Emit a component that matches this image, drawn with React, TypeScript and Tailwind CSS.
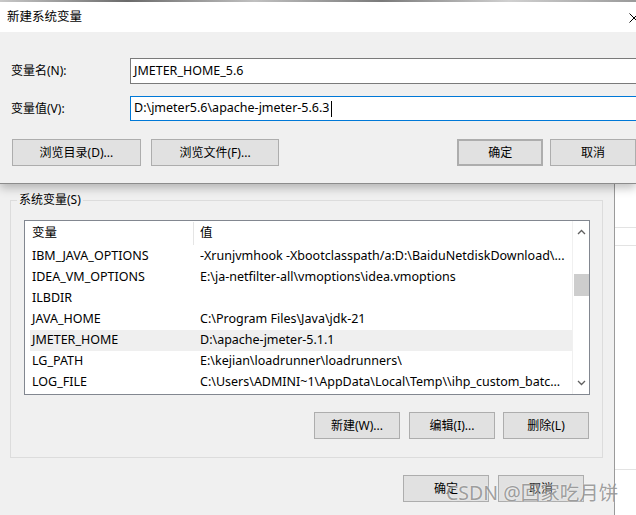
import React from "react";

const font = { fontFamily: '"Noto Sans", "Noto Sans CJK SC", sans-serif' };

const btnClass =
  "flex h-[27px] items-center justify-center border border-[#adadad] bg-[#e1e1e1] text-[12px] text-black";

const rows: [string, string][] = [
  ["IBM_JAVA_OPTIONS", "-Xrunjvmhook -Xbootclasspath/a:D:\\BaiduNetdiskDownload\\..."],
  ["IDEA_VM_OPTIONS", "E:\\ja-netfilter-all\\vmoptions\\idea.vmoptions"],
  ["ILBDIR", ""],
  ["JAVA_HOME", "C:\\Program Files\\Java\\jdk-21"],
  ["JMETER_HOME", "D:\\apache-jmeter-5.1.1"],
  ["LG_PATH", "E:\\kejian\\loadrunner\\loadrunners\\"],
  ["LOG_FILE", "C:\\Users\\ADMINI~1\\AppData\\Local\\Temp\\\\ihp_custom_batc..."],
];

function Chevron({ up }: { up?: boolean }) {
  return (
    <svg width="9" height="6" viewBox="0 0 9 6" className="text-[#606060]">
      <path
        d={up ? "M1 5 L4.5 1.5 L8 5" : "M1 1 L4.5 4.5 L8 1"}
        fill="none"
        stroke="currentColor"
        strokeWidth="1.3"
      />
    </svg>
  );
}

function NewVarDialog() {
  return (
    <div className="relative z-10 flex h-[184px] flex-col border-b border-[#8c8c8c] bg-[#f0f0f0] shadow-[0_4px_9px_rgba(0,0,0,0.25)]">
      <div className="h-[2px] bg-[linear-gradient(90deg,#c8c8c8,#6a6a6a_20%,#c0c0c0_40%,#7a7a7a_60%,#d0d0d0_80%,#9a9a9a)]" />
      <div className="relative flex h-[30px] items-center bg-white pl-[7px] text-[12.5px] text-black">
        新建系统变量
        <svg width="10" height="10" viewBox="0 0 10 10" className="absolute left-[629px] top-[11px]">
          <path d="M0.5 0.5 L9.5 9.5 M9.5 0.5 L0.5 9.5" stroke="#000" strokeWidth="1" />
        </svg>
      </div>
      <div className="flex flex-col pt-[26px]">
        <div className="flex h-[26px] items-center">
          <div className="w-[130px] pl-[11px] text-[12px]">变量名(N):</div>
          <div className="flex h-[26px] flex-1 items-center border border-r-0 border-[#7a7a7a] bg-white pl-[3px] text-[12.5px]">
            JMETER_HOME_5.6
          </div>
        </div>
        <div className="mt-[12px] flex h-[25px] items-center">
          <div className="w-[130px] pl-[11px] text-[12px]">变量值(V):</div>
          <div className="flex h-[25px] flex-1 items-center border border-r-0 border-[#0078d7] bg-white pl-[3px] text-[12.5px]">
            D:\jmeter5.6\apache-jmeter-5.6.3
            <span className="ml-[1px] inline-block h-[16px] w-[1px] bg-black" />
          </div>
        </div>
        <div className="mt-[18px] flex items-center">
          <div className={`${btnClass} ml-[12px] w-[129px]`}>浏览目录(D)...</div>
          <div className={`${btnClass} ml-[10px] w-[129px]`}>浏览文件(F)...</div>
          <div className={`${btnClass} ml-[178px] w-[86px] border-2 border-[#0078d7]`}>确定</div>
          <div className={`${btnClass} ml-[7px] w-[86px]`}>取消</div>
        </div>
      </div>
    </div>
  );
}

function VarList() {
  return (
    <div className="relative ml-[13px] mt-[19px] flex h-[175px] w-[566px] border border-[#828790] bg-white">
      <div className="flex min-w-0 flex-1 flex-col pl-[5px]">
        <div className="flex h-[25px] items-center text-[12.5px]">
          <div className="w-[163px] pl-[2px]">变量</div>
          <div className="h-[23px] w-px bg-[#e5e5e5]" />
          <div className="pl-[6px]">值</div>
        </div>
        {rows.map(([k, v]) => (
          <div
            key={k}
            className={`flex h-[21px] items-center text-[12.5px] ${k === "JMETER_HOME" ? "bg-[#efefef]" : ""}`}
          >
            <div className="w-[170px] shrink-0 pl-[2px]">{k}</div>
            <div className="overflow-hidden whitespace-nowrap">{v}</div>
          </div>
        ))}
      </div>
      <div className="flex w-[17px] flex-col items-center border-l border-[#f0f0f0] bg-white">
        <div className="flex h-[22px] items-center">
          <Chevron up />
        </div>
        <div className="mt-[31px] h-[22px] w-[15px] bg-[#cdcdcd]" />
        <div className="flex-1" />
        <div className="flex h-[22px] items-center">
          <Chevron />
        </div>
      </div>
    </div>
  );
}

function EnvWindow() {
  return (
    <div className="flex flex-1">
      <div className="flex w-[615px] flex-col border-r border-[#9a9a9a] bg-[#f0f0f0] shadow-[2px_0_4px_rgba(0,0,0,0.12)]">
        <div className="relative ml-[10px] mt-[16px] flex h-[258px] w-[593px] flex-col border border-[#dcdcdc]">
          <div className="absolute left-[6px] top-[-9px] bg-[#f0f0f0] px-[2px] text-[12px] leading-[16px]">
            系统变量(S)
          </div>
          <VarList />
          <div className="ml-[303px] mt-[17px] flex">
            <div className={`${btnClass} w-[86px]`}>新建(W)...</div>
            <div className={`${btnClass} ml-[9px] w-[86px]`}>编辑(I)...</div>
            <div className={`${btnClass} ml-[8px] w-[86px]`}>删除(L)</div>
          </div>
        </div>
        <div className="ml-[403px] mt-[17px] flex">
          <div className={`${btnClass} w-[86px]`}>确定</div>
          <div className={`${btnClass} ml-[9px] w-[86px]`}>取消</div>
        </div>
      </div>
      <div className="flex flex-1 flex-col bg-white">
        <div className="mt-[43px] h-px bg-[#e3e3e3]" />
        <div className="mt-[17px] h-px bg-[#e3e3e3]" />
        <div className="mt-[223px] h-px bg-[#e3e3e3]" />
      </div>
    </div>
  );
}

export default function App() {
  return (
    <div style={font} className="relative flex h-[515px] w-[636px] flex-col overflow-hidden bg-[#f0f0f0] text-black">
      <NewVarDialog />
      <EnvWindow />
      <div className="pointer-events-none absolute left-[446px] top-[480px] text-[19.5px] leading-[26px] text-[rgba(120,120,120,0.7)] [text-shadow:0_0_2px_rgba(255,255,255,0.8)]">
        CSDN @回家吃月饼
      </div>
    </div>
  );
}
